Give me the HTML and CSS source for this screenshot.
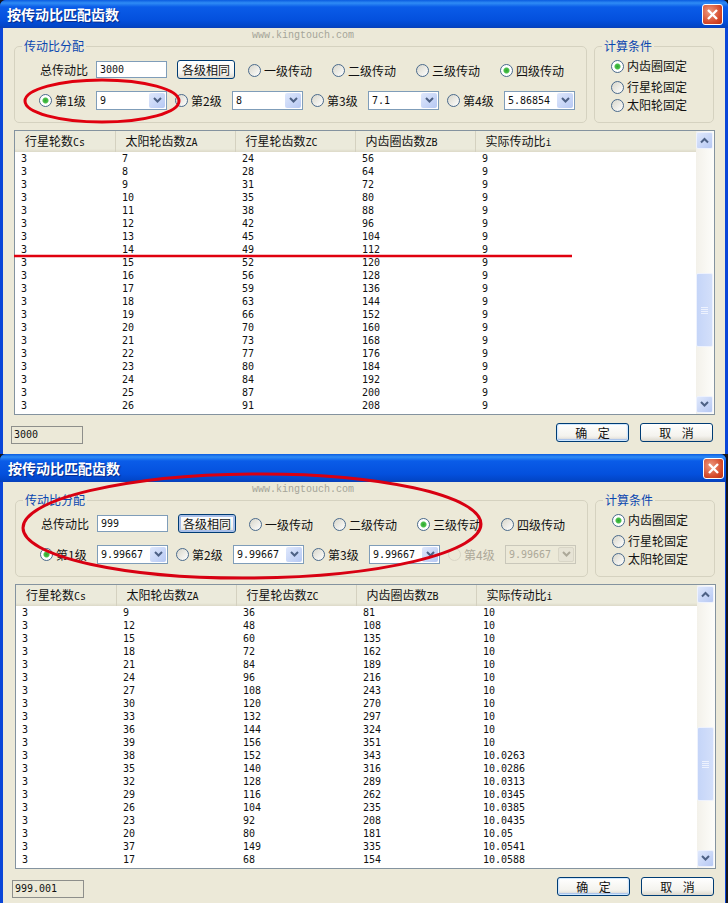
FILE: index.html
```html
<!DOCTYPE html>
<html lang="zh-CN">
<head>
    <meta charset="UTF-8">
    <title>按传动比匹配齿数</title>
    <link rel="stylesheet" href="styles.css">
</head>
<body>
<div class="desk">

    <!-- First dialog: four stage transmission -->
    <section class="dialog first">
        <header class="titlebar">
            <h1>按传动比匹配齿数</h1>
            <span class="close"><svg width="13" height="13" viewBox="0 0 13 13"><path d="M2 2l9 9M11 2l-9 9" stroke="#fff" stroke-width="2.4"/></svg></span>
        </header>
        <div class="client">
            <span class="watermark">www.kingtouch.com</span>
            <div class="groups">
                <fieldset class="group ratio">
                    <legend>传动比分配</legend>
                    <div class="row-total">
                        <label class="total-label">总传动比</label>
                        <span class="input">3000</span>
                        <button class="btn same">各级相同</button>
                        <span class="opt"><i class="radio"></i>一级传动</span>
                        <span class="opt"><i class="radio"></i>二级传动</span>
                        <span class="opt"><i class="radio"></i>三级传动</span>
                        <span class="opt"><i class="radio on"></i>四级传动</span>
                    </div>
                    <div class="row-stages">
                        <span class="stage"><i class="radio on"></i>第1级</span>
                        <span class="combo"><span class="val">9</span><span class="arrow"><svg width="9" height="7" viewBox="0 0 9 7"><path d="M1 1l3.5 3.5L8 1" fill="none" stroke="#4d6185" stroke-width="2"/></svg></span></span>
                        <span class="stage"><i class="radio"></i>第2级</span>
                        <span class="combo"><span class="val">8</span><span class="arrow"><svg width="9" height="7" viewBox="0 0 9 7"><path d="M1 1l3.5 3.5L8 1" fill="none" stroke="#4d6185" stroke-width="2"/></svg></span></span>
                        <span class="stage"><i class="radio"></i>第3级</span>
                        <span class="combo"><span class="val">7.1</span><span class="arrow"><svg width="9" height="7" viewBox="0 0 9 7"><path d="M1 1l3.5 3.5L8 1" fill="none" stroke="#4d6185" stroke-width="2"/></svg></span></span>
                        <span class="stage"><i class="radio"></i>第4级</span>
                        <span class="combo"><span class="val">5.86854</span><span class="arrow"><svg width="9" height="7" viewBox="0 0 9 7"><path d="M1 1l3.5 3.5L8 1" fill="none" stroke="#4d6185" stroke-width="2"/></svg></span></span>
                    </div>
                </fieldset>
                <fieldset class="group calc">
                    <legend>计算条件</legend>
                    <span class="opt c1"><i class="radio on"></i>内齿圈固定</span>
                    <span class="opt c2"><i class="radio"></i>行星轮固定</span>
                    <span class="opt c3"><i class="radio"></i>太阳轮固定</span>
                </fieldset>
            </div>
            <div class="list">
                <table>
                    <thead>
                        <tr><th>行星轮数<b>Cs</b></th><th>太阳轮齿数<b>ZA</b></th><th>行星轮齿数<b>ZC</b></th><th>内齿圈齿数<b>ZB</b></th><th>实际传动比<b>i</b></th></tr>
                    </thead>
                    <tbody>
                        <tr><td>3</td><td>7</td><td>24</td><td>56</td><td>9</td></tr>
                        <tr><td>3</td><td>8</td><td>28</td><td>64</td><td>9</td></tr>
                        <tr><td>3</td><td>9</td><td>31</td><td>72</td><td>9</td></tr>
                        <tr><td>3</td><td>10</td><td>35</td><td>80</td><td>9</td></tr>
                        <tr><td>3</td><td>11</td><td>38</td><td>88</td><td>9</td></tr>
                        <tr><td>3</td><td>12</td><td>42</td><td>96</td><td>9</td></tr>
                        <tr><td>3</td><td>13</td><td>45</td><td>104</td><td>9</td></tr>
                        <tr><td>3</td><td>14</td><td>49</td><td>112</td><td>9</td></tr>
                        <tr><td>3</td><td>15</td><td>52</td><td>120</td><td>9</td></tr>
                        <tr><td>3</td><td>16</td><td>56</td><td>128</td><td>9</td></tr>
                        <tr><td>3</td><td>17</td><td>59</td><td>136</td><td>9</td></tr>
                        <tr><td>3</td><td>18</td><td>63</td><td>144</td><td>9</td></tr>
                        <tr><td>3</td><td>19</td><td>66</td><td>152</td><td>9</td></tr>
                        <tr><td>3</td><td>20</td><td>70</td><td>160</td><td>9</td></tr>
                        <tr><td>3</td><td>21</td><td>73</td><td>168</td><td>9</td></tr>
                        <tr><td>3</td><td>22</td><td>77</td><td>176</td><td>9</td></tr>
                        <tr><td>3</td><td>23</td><td>80</td><td>184</td><td>9</td></tr>
                        <tr><td>3</td><td>24</td><td>84</td><td>192</td><td>9</td></tr>
                        <tr><td>3</td><td>25</td><td>87</td><td>200</td><td>9</td></tr>
                        <tr><td>3</td><td>26</td><td>91</td><td>208</td><td>9</td></tr>
                    </tbody>
                </table>
                <div class="scrollbar">
                    <span class="sb-btn"><svg width="9" height="7" viewBox="0 0 9 7"><path d="M1 5.5L4.500 2 8 5.500" fill="none" stroke="#4d6185" stroke-width="2"/></svg></span>
                    <div class="track"><div class="thumb"><i></i><i></i><i></i><i></i></div></div>
                    <span class="sb-btn"><svg width="9" height="7" viewBox="0 0 9 7"><path d="M1 1l3.500 3.500L8 1" fill="none" stroke="#4d6185" stroke-width="2"/></svg></span>
                </div>
            </div>
            <div class="footer">
                <span class="status">3000</span>
                <button class="btn action default">确 定</button>
                <button class="btn action">取 消</button>
            </div>
        </div>
    </section>

    <!-- Second dialog: three stage transmission -->
    <section class="dialog second">
        <header class="titlebar">
            <h1>按传动比匹配齿数</h1>
            <span class="close"><svg width="13" height="13" viewBox="0 0 13 13"><path d="M2 2l9 9M11 2l-9 9" stroke="#fff" stroke-width="2.4"/></svg></span>
        </header>
        <div class="client">
            <span class="watermark">www.kingtouch.com</span>
            <div class="groups">
                <fieldset class="group ratio">
                    <legend>传动比分配</legend>
                    <div class="row-total">
                        <label class="total-label">总传动比</label>
                        <span class="input">999</span>
                        <button class="btn same focused">各级相同</button>
                        <span class="opt"><i class="radio"></i>一级传动</span>
                        <span class="opt"><i class="radio"></i>二级传动</span>
                        <span class="opt"><i class="radio on"></i>三级传动</span>
                        <span class="opt"><i class="radio"></i>四级传动</span>
                    </div>
                    <div class="row-stages">
                        <span class="stage"><i class="radio on"></i>第1级</span>
                        <span class="combo"><span class="val">9.99667</span><span class="arrow"><svg width="9" height="7" viewBox="0 0 9 7"><path d="M1 1l3.5 3.5L8 1" fill="none" stroke="#4d6185" stroke-width="2"/></svg></span></span>
                        <span class="stage"><i class="radio"></i>第2级</span>
                        <span class="combo"><span class="val">9.99667</span><span class="arrow"><svg width="9" height="7" viewBox="0 0 9 7"><path d="M1 1l3.5 3.5L8 1" fill="none" stroke="#4d6185" stroke-width="2"/></svg></span></span>
                        <span class="stage"><i class="radio"></i>第3级</span>
                        <span class="combo"><span class="val">9.99667</span><span class="arrow"><svg width="9" height="7" viewBox="0 0 9 7"><path d="M1 1l3.5 3.5L8 1" fill="none" stroke="#4d6185" stroke-width="2"/></svg></span></span>
                        <span class="stage disabled"><i class="radio"></i>第4级</span>
                        <span class="combo disabled"><span class="val">9.99667</span><span class="arrow"><svg width="9" height="7" viewBox="0 0 9 7"><path d="M1 1l3.5 3.5L8 1" fill="none" stroke="#aca899" stroke-width="2"/></svg></span></span>
                    </div>
                </fieldset>
                <fieldset class="group calc">
                    <legend>计算条件</legend>
                    <span class="opt c1"><i class="radio on"></i>内齿圈固定</span>
                    <span class="opt c2"><i class="radio"></i>行星轮固定</span>
                    <span class="opt c3"><i class="radio"></i>太阳轮固定</span>
                </fieldset>
            </div>
            <div class="list">
                <table>
                    <thead>
                        <tr><th>行星轮数<b>Cs</b></th><th>太阳轮齿数<b>ZA</b></th><th>行星轮齿数<b>ZC</b></th><th>内齿圈齿数<b>ZB</b></th><th>实际传动比<b>i</b></th></tr>
                    </thead>
                    <tbody>
                        <tr><td>3</td><td>9</td><td>36</td><td>81</td><td>10</td></tr>
                        <tr><td>3</td><td>12</td><td>48</td><td>108</td><td>10</td></tr>
                        <tr><td>3</td><td>15</td><td>60</td><td>135</td><td>10</td></tr>
                        <tr><td>3</td><td>18</td><td>72</td><td>162</td><td>10</td></tr>
                        <tr><td>3</td><td>21</td><td>84</td><td>189</td><td>10</td></tr>
                        <tr><td>3</td><td>24</td><td>96</td><td>216</td><td>10</td></tr>
                        <tr><td>3</td><td>27</td><td>108</td><td>243</td><td>10</td></tr>
                        <tr><td>3</td><td>30</td><td>120</td><td>270</td><td>10</td></tr>
                        <tr><td>3</td><td>33</td><td>132</td><td>297</td><td>10</td></tr>
                        <tr><td>3</td><td>36</td><td>144</td><td>324</td><td>10</td></tr>
                        <tr><td>3</td><td>39</td><td>156</td><td>351</td><td>10</td></tr>
                        <tr><td>3</td><td>38</td><td>152</td><td>343</td><td>10.0263</td></tr>
                        <tr><td>3</td><td>35</td><td>140</td><td>316</td><td>10.0286</td></tr>
                        <tr><td>3</td><td>32</td><td>128</td><td>289</td><td>10.0313</td></tr>
                        <tr><td>3</td><td>29</td><td>116</td><td>262</td><td>10.0345</td></tr>
                        <tr><td>3</td><td>26</td><td>104</td><td>235</td><td>10.0385</td></tr>
                        <tr><td>3</td><td>23</td><td>92</td><td>208</td><td>10.0435</td></tr>
                        <tr><td>3</td><td>20</td><td>80</td><td>181</td><td>10.05</td></tr>
                        <tr><td>3</td><td>37</td><td>149</td><td>335</td><td>10.0541</td></tr>
                        <tr><td>3</td><td>17</td><td>68</td><td>154</td><td>10.0588</td></tr>
                    </tbody>
                </table>
                <div class="scrollbar">
                    <span class="sb-btn"><svg width="9" height="7" viewBox="0 0 9 7"><path d="M1 5.5L4.500 2 8 5.500" fill="none" stroke="#4d6185" stroke-width="2"/></svg></span>
                    <div class="track"><div class="thumb"><i></i><i></i><i></i><i></i></div></div>
                    <span class="sb-btn"><svg width="9" height="7" viewBox="0 0 9 7"><path d="M1 1l3.500 3.500L8 1" fill="none" stroke="#4d6185" stroke-width="2"/></svg></span>
                </div>
            </div>
            <div class="footer">
                <span class="status">999.001</span>
                <button class="btn action default">确 定</button>
                <button class="btn action">取 消</button>
            </div>
        </div>
    </section>

    <!-- Red marks drawn over the screenshots -->
    <svg class="marks" width="728" height="903" viewBox="0 0 728 903">
        <ellipse cx="102" cy="101" rx="77" ry="21" fill="none" stroke="#e0000f" stroke-width="3"/>
        <line x1="14" y1="256" x2="572" y2="256" stroke="#e0000f" stroke-width="2.500"/>
        <ellipse cx="252" cy="526" rx="229" ry="52" transform="rotate(-0.5 252 526)" fill="none" stroke="#d80012" stroke-width="3"/>
    </svg>
</div>
</body>
</html>
```

FILE: styles.css
```css
* {
    box-sizing: border-box;
}
body {
    margin: 0;
    background-color: #fff;
    font-family: "Noto Sans CJK SC", sans-serif;
    font-size: 12px;
    color: #111;
}
.desk {
    position: relative;
    width: 728px;
    height: 903px;
    overflow: hidden;
    background-color: #15151c;
}

/* Window frame */
.dialog {
    display: flex;
    flex-direction: column;
    border-radius: 6px 6px 0 0;
    overflow: hidden;
    background-color: #0a46d8;
}
.first {
    height: 454px;
    padding: 0 3px 0 3px;
}
.second {
    height: 449px;
    width: 726px;
    padding: 0 1px 0 3px;
    border-right: 0;
}
.titlebar {
    display: flex;
    align-items: center;
    justify-content: space-between;
    flex: 0 0 28px;
    margin: 0 -3px;
    padding: 0 5px 0 7px;
    background: linear-gradient(#0a5be0 0, #2f8cf5 3px, #0a5ce8 7px, #0450dd 20px, #0246c8 26px, #0a3fb8 28px);
}
.second .titlebar {
    padding-right: 2px;
    margin-right: -1px;
    padding-left: 8px;
}
.titlebar h1 {
    margin: 0;
    font-size: 14px;
    line-height: 18px;
    font-weight: bold;
    color: #fff;
    text-shadow: 1px 1px 1px #0b2a86;
}
.close {
    display: flex;
    align-items: center;
    justify-content: center;
    width: 21px;
    height: 21px;
    border: 1px solid #fff;
    border-radius: 3px;
    background: radial-gradient(circle at 35% 35%, #ee9a80, #d5492a 65%, #bb3013);
}

/* Client area */
.client {
    position: relative;
    flex: 1;
    padding: 10px 0 0 11px;
    background-color: #ece9d8;
}
.second .client {
    padding-left: 12px;
}
.watermark {
    position: absolute;
    top: 2px;
    left: 249px;
    font-family: "Liberation Mono", monospace;
    font-size: 10px;
    line-height: 12px;
    color: #a5a598;
}
.groups {
    display: flex;
    gap: 7px;
    height: 85px;
}
.group {
    flex: none;
    min-width: 0;
    margin: 0;
    padding: 0;
    border: 1px solid #d5d2c0;
    border-radius: 5px;
    height: 85px;
}
.group legend {
    margin-left: 7px;
    padding: 0 2px;
    font-size: 12px;
    line-height: 16px;
    color: #0a47b0;
}
.ratio {
    width: 573px;
}
.calc {
    position: relative;
    width: 120px;
}

/* First row of the ratio group */
.row-total {
    display: flex;
    align-items: center;
    height: 19px;
    margin-top: 6px;
}
.total-label {
    width: 56px;
    margin-left: 25px;
}
.input {
    width: 71px;
    height: 17px;
    padding-left: 3px;
    border: 1px solid #7f9db9;
    background-color: #fff;
    font-family: "DejaVu Sans Mono", monospace;
    font-size: 10px;
    line-height: 15px;
}
.btn {
    padding: 0;
    border: 1px solid #003c74;
    border-radius: 3px;
    background: linear-gradient(#fff, #f4f3ee 70%, #dcd8ce);
    font-family: inherit;
    font-size: 12px;
    line-height: 14px;
    color: #111;
}
.same {
    width: 58px;
    height: 19px;
    margin: 0 13px 0 10px;
}
.focused {
    box-shadow: inset 0 0 0 2px #a9bfe8;
}
.opt {
    display: flex;
    align-items: center;
    width: 84px;
    gap: 3px;
    line-height: 14px;
}
.row-total .opt {
    position: relative;
    top: 1px;
}
.radio {
    flex: none;
    display: block;
    width: 13px;
    height: 13px;
    border: 1px solid #4a6a8c;
    border-radius: 50%;
    background: linear-gradient(135deg, #d8d6ca, #fff);
}
.radio.on {
    background: radial-gradient(circle, #2fa52f 0, #4cc24c 2.5px, #fff 3.500px);
}

/* Second row of the ratio group */
.row-stages {
    display: flex;
    align-items: center;
    height: 19px;
    margin: 12px 0 0 24px;
}
.stage {
    display: flex;
    align-items: center;
    flex: none;
    width: 57px;
    gap: 3px;
}
.stage.disabled {
    color: #aca899;
}
.stage.disabled .radio {
    border-color: #d9d6c6;
    background: #ece9d8;
}
.combo {
    display: flex;
    align-items: center;
    justify-content: space-between;
    flex: none;
    width: 71px;
    height: 19px;
    margin-right: 8px;
    padding: 1px 1px 1px 3px;
    border: 1px solid #7f9db9;
    background-color: #fff;
    font-family: "DejaVu Sans Mono", monospace;
    font-size: 10px;
}
.combo.disabled {
    border-color: #c9c7ba;
    background-color: #ece9d8;
    color: #aca899;
}
.arrow {
    display: flex;
    align-items: center;
    justify-content: center;
    width: 16px;
    height: 15px;
    border-radius: 2px;
    background: linear-gradient(135deg, #dfe8fc, #b6c8f3);
}
.combo.disabled .arrow {
    background: #e6e3d5;
    border: 1px solid #d8d5c6;
}

/* Calculation group */
.calc .opt {
    position: absolute;
    left: 16px;
    width: 100px;
}
.calc .c1 { top: 5px; }
.calc .c2 { top: 26px; }
.calc .c3 { top: 44px; }

/* Result list */
.list {
    display: flex;
    width: 701px;
    height: 285px;
    margin-top: 7px;
    border: 1px solid #84939f;
    background-color: #fff;
}
table {
    flex: 1;
    align-self: flex-start;
    width: 681px;
    border-collapse: collapse;
    table-layout: fixed;
}
th {
    height: 21px;
    padding: 1px 0 0 10px;
    border-right: 1px solid #d4d1c0;
    background: linear-gradient(#ebeadb 85%, #dcd9c8);
    font-weight: normal;
    font-size: 12px;
    line-height: 14px;
    text-align: left;
    white-space: nowrap;
}
th:nth-child(1) { width: 100px; }
th:nth-child(2), th:nth-child(3), th:nth-child(4) { width: 120px; }
th:nth-child(5) { width: 221px; border-right: 0; }
th b {
    font-family: "DejaVu Sans Mono", monospace;
    font-size: 10px;
    font-weight: normal;
}
td {
    height: 13px;
    padding: 0 0 0 7px;
    font-family: "DejaVu Sans Mono", monospace;
    font-size: 10px;
    line-height: 13px;
}
td:first-child {
    padding-left: 6px;
}

/* Scrollbar */
.scrollbar {
    display: flex;
    flex-direction: column;
    flex: 0 0 18px;
    padding: 1px 1px 1px 0;
    background: linear-gradient(90deg, #f3f1ea, #fdfdfa);
}
.sb-btn {
    display: flex;
    align-items: center;
    justify-content: center;
    flex: 0 0 17px;
    border: 1px solid #eef2fd;
    border-radius: 2px;
    background: linear-gradient(135deg, #dfe8fc, #b6c8f3);
}
.track {
    flex: 1;
}
.thumb {
    display: flex;
    flex-direction: column;
    align-items: center;
    justify-content: center;
    gap: 1px;
    height: 74px;
    margin-top: 124px;
    border: 1px solid #eef2fd;
    border-radius: 2px;
    background: linear-gradient(90deg, #c5d5f8, #d3dffa);
}
.thumb i {
    display: block;
    width: 7px;
    height: 1px;
    background-color: #edf2fe;
}

/* Bottom row */
.footer {
    display: flex;
    align-items: flex-start;
    margin-top: 8px;
}
.status {
    width: 72px;
    height: 18px;
    margin: 3px 473px 0 -3px;
    padding-left: 2px;
    border: 1px solid #8e8f8b;
    font-family: "DejaVu Sans Mono", monospace;
    font-size: 10px;
    line-height: 16px;
}
.action {
    width: 73px;
    height: 19px;
    margin-right: 11px;
    word-spacing: 8px;
}
.default {
    box-shadow: inset 0 0 0 1px #cee7ff, inset 0 -1px 1px 1px #a8c4ee;
}

/* Overlay annotations */
.marks {
    position: absolute;
    top: 0;
    left: 0;
    pointer-events: none;
}
```
